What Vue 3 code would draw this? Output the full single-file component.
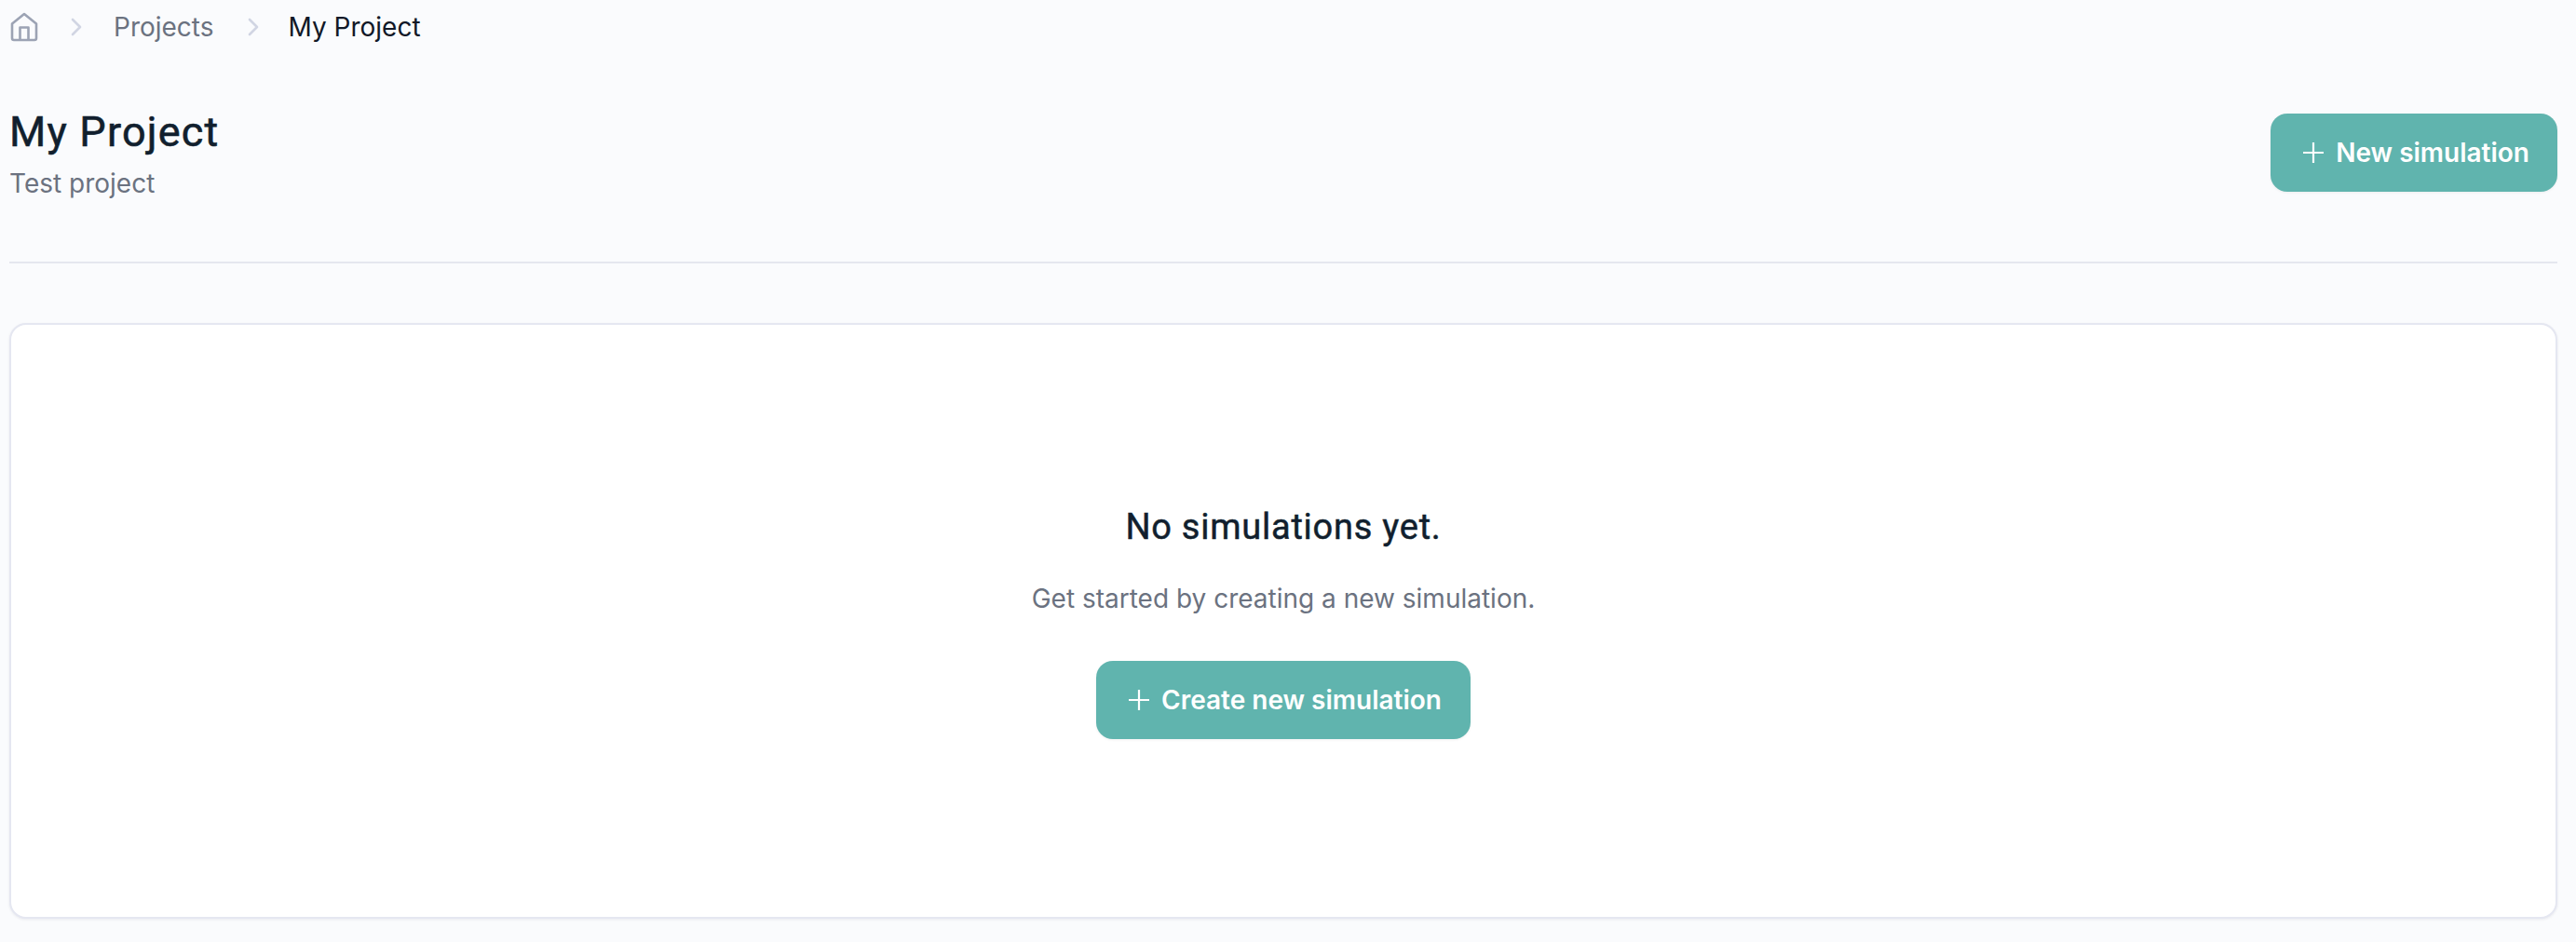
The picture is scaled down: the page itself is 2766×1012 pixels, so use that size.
<template>
  <div class="page">
    <nav class="crumbs">
      <svg class="home" viewBox="0 0 30 32" fill="none" stroke="#9ca3b4" stroke-width="2.6" stroke-linejoin="round">
        <path d="M2 12.5 15 2l13 10.5V28a2 2 0 0 1-2 2H4a2 2 0 0 1-2-2z" />
        <path d="M10.5 30V16.5h9V30" />
      </svg>
      <svg class="chev" viewBox="0 0 12 20" fill="none" stroke="#d1d5e3" stroke-width="2.6" stroke-linecap="round" stroke-linejoin="round">
        <path d="M2 2l8 8-8 8" />
      </svg>
      <span class="crumb">Projects</span>
      <svg class="chev" viewBox="0 0 12 20" fill="none" stroke="#d1d5e3" stroke-width="2.6" stroke-linecap="round" stroke-linejoin="round">
        <path d="M2 2l8 8-8 8" />
      </svg>
      <span class="crumb current">My Project</span>
    </nav>

    <header class="head">
      <div>
        <h1>My Project</h1>
        <p class="sub">Test project</p>
      </div>
      <button class="btn big">
        <svg class="plus" viewBox="0 0 22 22" fill="none" stroke="#fff" stroke-width="2.2"><path d="M11 0v22M0 11h22" /></svg>
        New simulation
      </button>
    </header>

    <section class="card">
      <h2>No simulations yet.</h2>
      <p class="hint">Get started by creating a new simulation.</p>
      <button class="btn wide">
        <svg class="plus" viewBox="0 0 22 22" fill="none" stroke="#fff" stroke-width="2.2"><path d="M11 0v22M0 11h22" /></svg>
        Create new simulation
      </button>
    </section>
  </div>
</template>

<script setup>
</script>

<style>
html,
body {
  background: #fafbfd;
}
</style>

<style scoped>
.page {
  box-sizing: border-box;
  height: 1012px;
  padding: 0 20px 0 10px;
  font-family: Inter, "Liberation Sans", sans-serif;
  background: #fafbfd;
  overflow: hidden;
}
.crumbs {
  display: flex;
  align-items: center;
  height: 57px;
  padding-left: 1px;
}
.home {
  width: 30px;
  height: 32px;
}
.chev {
  width: 12px;
  height: 20px;
  margin: 0 34px 0 35px;
}
.crumb {
  font-size: 28px;
  line-height: 56px;
  color: #6b7280;
}
.chev + .crumb + .chev {
  margin: 0 32px 0 36px;
}
.current {
  color: #111827;
}
.head {
  display: flex;
  justify-content: space-between;
  align-items: flex-start;
  height: 226px;
  padding-top: 65px;
  box-sizing: border-box;
  border-bottom: 2px solid #e5e7ef;
}
h1 {
  margin: -3px 0 0;
  font-family: Roboto, sans-serif;
  font-size: 45px;
  line-height: 46px;
  font-weight: 400;
  letter-spacing: 1.2px;
  -webkit-text-stroke: 0.6px #111f2e;
  color: #111f2e;
}
.sub {
  margin: 12px 0 0;
  font-size: 28px;
  line-height: 40px;
  color: #6b7280;
}
.btn {
  display: inline-flex;
  align-items: center;
  gap: 13px;
  height: 84px;
  padding: 0 30px 0 35px;
  border: 0;
  border-radius: 18px;
  background: #60b4ae;
  color: #fff;
  font-family: Inter, sans-serif;
  font-size: 28px;
  font-weight: 600;
  box-shadow: 0 1px 3px rgba(0, 0, 0, 0.06);
}
.wide {
  padding: 0 31px 0 35px;
  margin-top: 47px;
}
.plus {
  width: 22px;
  height: 22px;
}
.card {
  box-sizing: border-box;
  height: 640px;
  margin-top: 64px;
  padding-top: 193px;
  display: flex;
  flex-direction: column;
  align-items: center;
  background: #fff;
  border: 2px solid #e5e7f1;
  border-radius: 18px;
  box-shadow: 0 1px 3px rgba(20, 30, 60, 0.08);
}
h2 {
  margin: 0;
  font-family: Roboto, sans-serif;
  font-size: 38px;
  line-height: 48px;
  font-weight: 400;
  letter-spacing: 0.75px;
  -webkit-text-stroke: 0.5px #111f2e;
  color: #111f2e;
}
.hint {
  margin: 33px 0 0;
  font-size: 28px;
  line-height: 40px;
  color: #6b7280;
}
</style>
